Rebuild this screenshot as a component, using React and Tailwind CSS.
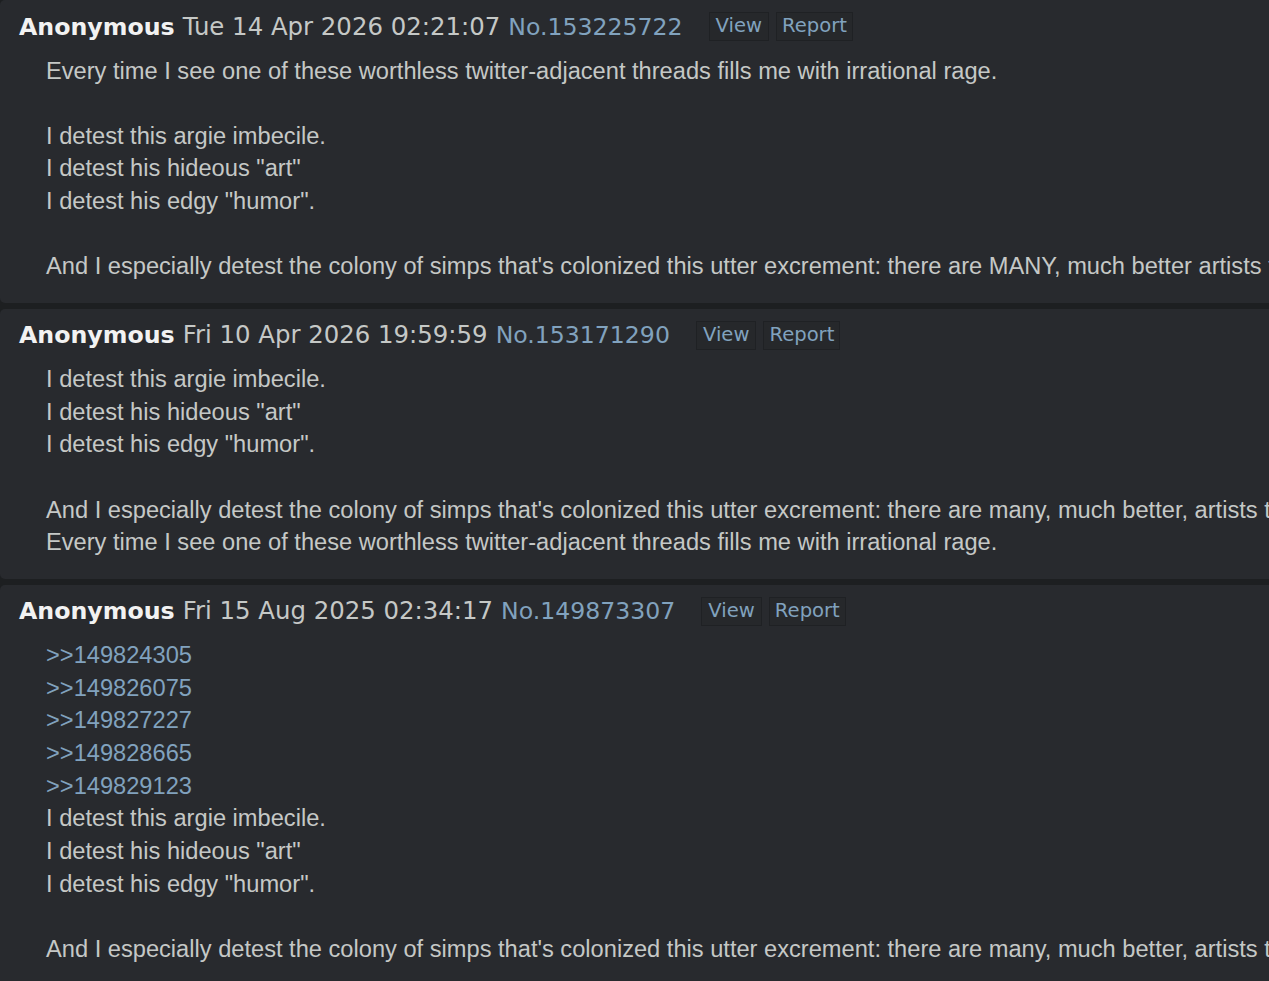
import React from 'react';

const posts = [
  {
    id: '153225722',
    date: 'Tue 14 Apr 2026 02:21:07',
    lines: [
      'Every time I see one of these worthless twitter-adjacent threads fills me with irrational rage.',
      '',
      'I detest this argie imbecile.',
      'I detest his hideous "art"',
      'I detest his edgy "humor".',
      '',
      "And I especially detest the colony of simps that's colonized this utter excrement: there are MANY, much better artists that deserve the attention.",
    ],
  },
  {
    id: '153171290',
    date: 'Fri 10 Apr 2026 19:59:59',
    lines: [
      'I detest this argie imbecile.',
      'I detest his hideous "art"',
      'I detest his edgy "humor".',
      '',
      "And I especially detest the colony of simps that's colonized this utter excrement: there are many, much better, artists that deserve the attention.",
      'Every time I see one of these worthless twitter-adjacent threads fills me with irrational rage.',
    ],
  },
  {
    id: '149873307',
    date: 'Fri 15 Aug 2025 02:34:17',
    quotes: ['149824305', '149826075', '149827227', '149828665', '149829123'],
    lines: [
      'I detest this argie imbecile.',
      'I detest his hideous "art"',
      'I detest his edgy "humor".',
      '',
      "And I especially detest the colony of simps that's colonized this utter excrement: there are many, much better, artists that deserve the attention.",
    ],
  },
];

function Post({ post }) {
  return (
    <div className="w-max min-w-full rounded-[5px] bg-[#282a2e] pt-[10.5px] pb-[19.5px] pr-8">
      {/* header */}
      <div className="flex items-center pl-[19px] font-['DejaVu_Sans',sans-serif] leading-[32.7px]">
        <span className="text-[23.7px] font-bold text-[#f2f2f2]">Anonymous</span>
        <span className="ml-[8px] text-[24.4px] text-[#c5c8c6]">{post.date}</span>
        <span className="ml-[8px] text-[23.6px] text-[#81a2be]">No.{post.id}</span>
        <div className="ml-[26px] flex gap-[7px] text-[19.6px] leading-[26px]">
          <span className="border border-[#1f2124] bg-[#26282b] px-[6px] pb-[1px] text-[#81a2be]">View</span>
          <span className="border border-[#1f2124] bg-[#26282b] px-[5px] pb-[1px] text-[#81a2be]">Report</span>
        </div>
      </div>

      {/* body */}
      <div className="mt-[11.3px] pl-[46px] font-['Liberation_Sans',Arial,sans-serif] text-[23.65px] leading-[32.67px] text-[#c5c8c6]">
        {post.quotes &&
          post.quotes.map((q) => (
            <div key={q} className="text-[#81a2be]">&gt;&gt;{q}</div>
          ))}
        {post.lines.map((line, i) => (
          <div key={i} className="h-[32.67px] whitespace-pre">{line}</div>
        ))}
      </div>
    </div>
  );
}

export default function App() {
  return (
    <div className="h-screen w-full overflow-hidden bg-[#1d1f21]">
      <div className="flex flex-col items-start gap-[6px]">
        {posts.map((p) => (
          <Post key={p.id} post={p} />
        ))}
      </div>
    </div>
  );
}
